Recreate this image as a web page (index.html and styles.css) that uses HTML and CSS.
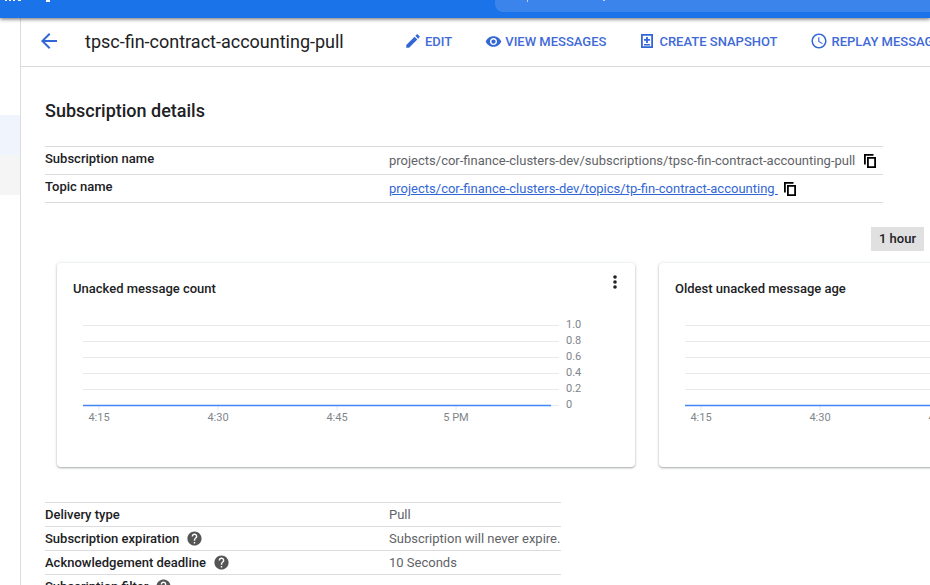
FILE: index.html
```html
<!DOCTYPE html>
<html lang="en">
  <head>
    <meta charset="UTF-8" />
    <meta name="viewport" content="width=device-width, initial-scale=1.0" />
    <title>Subscription details</title>
    <link rel="stylesheet" href="styles.css">
  </head>
  <body>
    <svg class="defs" width="0" height="0">
      <symbol id="i-back" viewBox="0 0 24 24"><path d="M20 11H7.83l5.59-5.59L12 4l-8 8 8 8 1.41-1.41L7.83 13H20v-2z"/></symbol>
      <symbol id="i-edit" viewBox="0 0 24 24"><path d="M3 17.25V21h3.75L17.81 9.94l-3.75-3.75L3 17.25zM20.71 7.04c.39-.39.39-1.02 0-1.41l-2.34-2.34c-.39-.39-1.02-.39-1.41 0l-1.83 1.83 3.75 3.75 1.83-1.83z"/></symbol>
      <symbol id="i-eye" viewBox="0 0 24 24"><path d="M12 4.5C7 4.5 2.73 7.61 1 12c1.73 4.39 6 7.5 11 7.5s9.27-3.11 11-7.5c-1.73-4.39-6-7.5-11-7.5zM12 17c-2.76 0-5-2.24-5-5s2.24-5 5-5 5 2.24 5 5-2.24 5-5 5zm0-8c-1.66 0-3 1.34-3 3s1.34 3 3 3 3-1.34 3-3-1.34-3-3-3z"/></symbol>
      <symbol id="i-snapshot" viewBox="0 0 12 14"><path fill-rule="evenodd" d="M0 0h12v14H0zM1.8 1.8v10.4h8.4V1.8zM5.1 3h1.8v2.1H9v1.7H6.9v2.1H5.1V6.8H3V5.1h2.1zM3 10h6v1.4H3z"/></symbol>
      <symbol id="i-clock" viewBox="0 0 24 24"><path d="M11.99 2C6.47 2 2 6.48 2 12s4.47 10 9.99 10C17.52 22 22 17.52 22 12S17.52 2 11.99 2zM12 20c-4.42 0-8-3.58-8-8s3.58-8 8-8 8 3.58 8 8-3.58 8-8 8zm.5-13H11v6l5.25 3.15.75-1.23-4.5-2.67z"/></symbol>
      <symbol id="i-copy" viewBox="0 0 12 14"><path fill-rule="evenodd" d="M0 0h9.5v1.8H1.8V10.500H0zM3 3h9v11H3zM4.800 4.800v7.400h5.400V4.800z"/></symbol>
      <symbol id="i-help" viewBox="0 0 24 24"><path d="M12 2C6.48 2 2 6.48 2 12s4.48 10 10 10 10-4.48 10-10S17.52 2 12 2zm1 17h-2v-2h2v2zm2.07-7.75l-.9.92C13.45 12.9 13 13.5 13 15h-2v-.5c0-1.1.45-2.1 1.17-2.83l1.24-1.26c.37-.36.59-.86.59-1.41 0-1.1-.9-2-2-2s-2 .9-2 2H8c0-2.21 1.79-4 4-4s4 1.79 4 4c0 .88-.36 1.68-.93 2.25z"/></symbol>
      <symbol id="i-more" viewBox="0 0 4 14"><circle cx="2" cy="2" r="1.8"/><circle cx="2" cy="7" r="1.8"/><circle cx="2" cy="12" r="1.8"/></symbol>
    </svg>

    <header class="topbar">
      <svg class="topbar-cut" width="60" height="3"><path d="M5 0h2v1H5zM9 0h2v1H9zM13 0h2v1h-2zM18 0h3v1h-3zM46 0h4v2h-4z"/></svg>
      <div class="search">
        <svg class="search-cut" width="120" height="3"><path d="M32 0h1v2h-1zM108 0h2v1h-2z"/></svg>
      </div>
    </header>

    <div class="layout">
      <nav class="sidenav">
        <div class="nav-item selected"></div>
        <div class="nav-item muted"></div>
      </nav>

      <div class="page">
        <div class="toolbar">
          <a class="back"><svg class="icon-back"><use href="#i-back"/></svg></a>
          <h1>tpsc-fin-contract-accounting-pull</h1>
          <a class="action action-edit"><svg class="icon-edit"><use href="#i-edit"/></svg>Edit</a>
          <a class="action action-view"><svg class="icon-eye"><use href="#i-eye"/></svg>View messages</a>
          <a class="action action-snap"><svg class="icon-snap"><use href="#i-snapshot"/></svg>Create snapshot</a>
          <a class="action action-replay"><svg class="icon-clock"><use href="#i-clock"/></svg>Replay messages</a>
        </div>

        <main class="content">
          <h2>Subscription details</h2>

          <div class="details">
            <div class="row">
              <span class="label">Subscription name</span>
              <span class="value">projects/cor-finance-clusters-dev/subscriptions/tpsc-fin-contract-accounting-pull</span>
              <svg class="copy"><use href="#i-copy"/></svg>
            </div>
            <div class="row">
              <span class="label">Topic name</span>
              <a class="value link">projects/cor-finance-clusters-dev/topics/tp-fin-contract-accounting&nbsp;</a>
              <svg class="copy"><use href="#i-copy"/></svg>
            </div>
          </div>

          <div class="range"><button class="range-btn">1 hour</button></div>

          <div class="cards">
            <section class="card">
              <div class="card-head">
                <h3>Unacked message count</h3>
                <svg class="more"><use href="#i-more"/></svg>
              </div>
              <svg class="chart" width="578" height="120">
                <g class="grid">
                  <path d="M26 1.5H502M26 17.5H502M26 33.5H502M26 49.5H502M26 65.5H502M26 81.5H502"/>
                  <path d="M42 82v5M161 82v5M280 82v5M399 82v5"/>
                </g>
                <path class="series" d="M26 81.5H494"/>
                <g class="ylabels">
                  <text x="509" y="4">1.0</text>
                  <text x="509" y="20">0.8</text>
                  <text x="509" y="36">0.6</text>
                  <text x="509" y="52">0.4</text>
                  <text x="509" y="68">0.2</text>
                  <text x="509" y="84">0</text>
                </g>
                <g class="xlabels">
                  <text x="42" y="97">4:15</text>
                  <text x="161" y="97">4:30</text>
                  <text x="280" y="97">4:45</text>
                  <text x="399" y="97">5 PM</text>
                </g>
              </svg>
            </section>

            <section class="card">
              <div class="card-head">
                <h3>Oldest unacked message age</h3>
              </div>
              <svg class="chart" width="578" height="120">
                <g class="grid">
                  <path d="M26 1.5H502M26 17.5H502M26 33.5H502M26 49.5H502M26 65.5H502M26 81.5H502"/>
                  <path d="M42 82v5M161 82v5M280 82v5"/>
                </g>
                <path class="series" d="M26 81.5H494"/>
                <g class="xlabels">
                  <text x="42" y="97">4:15</text>
                  <text x="161" y="97">4:30</text>
                  <text x="280" y="97">4:45</text>
                </g>
              </svg>
            </section>
          </div>

          <div class="props">
            <div class="prop">
              <span class="label">Delivery type</span>
              <span class="value">Pull</span>
            </div>
            <div class="prop">
              <span class="label">Subscription expiration<svg class="help"><use href="#i-help"/></svg></span>
              <span class="value">Subscription will never expire.</span>
            </div>
            <div class="prop">
              <span class="label">Acknowledgement deadline<svg class="help"><use href="#i-help"/></svg></span>
              <span class="value">10 Seconds</span>
            </div>
            <div class="prop">
              <span class="label">Subscription filter<svg class="help"><use href="#i-help"/></svg></span>
            </div>
          </div>
        </main>
      </div>
    </div>
  </body>
</html>
```

FILE: styles.css
```css
html,
body {
  height: 100%;
}

body {
  font-family: Roboto, Arial, sans-serif;
  margin: 0;
  color: #202124;
  background-color: white;
  overflow: hidden;
}

.defs {
  display: block;
}

.topbar {
  display: flex;
  height: 18px;
  background-color: #1a73e8;
  box-shadow: 0 1px 4px rgba(0, 0, 0, 0.6);
  position: relative;
  z-index: 1;
}

.topbar-cut {
  fill: white;
  width: 60px;
  flex-shrink: 0;
}

.search {
  margin-left: 435px;
  flex: 1;
  height: 12px;
  background-color: #3b84eb;
  border-bottom-left-radius: 8px;
}

.search-cut {
  display: block;
  fill: #b9d3f8;
}

.layout {
  display: flex;
  height: 567px;
}

.sidenav {
  width: 20px;
  flex-shrink: 0;
  border-right: 1px solid #dadce0;
  padding-top: 97px;
}

.nav-item {
  height: 40px;
}

.nav-item.selected {
  background-color: #eff4fd;
}

.nav-item.muted {
  background-color: #f5f5f5;
}

.page {
  flex: 1;
  min-width: 0;
}

.toolbar {
  display: flex;
  align-items: center;
  box-sizing: border-box;
  height: 49px;
  padding-bottom: 2px;
  border-bottom: 1px solid #dadce0;
  white-space: nowrap;
}

.back {
  display: flex;
  margin-left: 16px;
}

.icon-back {
  width: 24px;
  height: 24px;
  fill: #3367d6;
}

h1 {
  font-size: 18px;
  font-weight: 400;
  margin: 0 0 0 24px;
  width: 319px;
  flex-shrink: 0;
}

.action {
  display: flex;
  align-items: center;
  flex-shrink: 0;
  font-size: 13px;
  font-weight: 500;
  text-transform: uppercase;
  color: #3f6ad8;
}

.action svg {
  fill: #3367d6;
  flex-shrink: 0;
}

.icon-edit {
  width: 18px;
  height: 18px;
  margin-right: 3px;
}

.icon-eye {
  width: 17px;
  height: 17px;
  margin-right: 3px;
}

.icon-snap {
  width: 12px;
  height: 14px;
  margin-right: 6px;
}

.icon-clock {
  width: 18px;
  height: 18px;
  margin-right: 4px;
}

.action-view {
  margin-left: 33px;
}

.action-snap {
  margin-left: 35px;
}

.action-replay {
  margin-left: 32px;
}

.content {
  padding: 0 6px 0 24px;
}

h2 {
  font-size: 18px;
  font-weight: 500;
  line-height: 24px;
  margin: 0;
  padding-top: 32px;
  height: 47px;
  box-sizing: content-box;
}

.details {
  width: 838px;
  border-top: 1px solid #dadce0;
}

.row {
  display: flex;
  align-items: center;
  height: 27px;
  border-bottom: 1px solid #dadce0;
}

.label {
  display: flex;
  align-items: center;
  width: 344px;
  flex-shrink: 0;
  font-size: 13px;
  font-weight: 500;
}

.row .label {
  padding-bottom: 4px;
}

.value {
  font-size: 13px;
  color: #5f6368;
  white-space: nowrap;
}

.value.link {
  color: #3367d6;
  text-decoration: underline;
  margin-right: -3px;
}

.copy {
  width: 12px;
  height: 14px;
  margin-left: 9px;
  flex-shrink: 0;
  fill: black;
}

.range {
  display: flex;
  justify-content: flex-end;
  margin-top: 24px;
}

.range-btn {
  font-family: inherit;
  font-size: 13px;
  font-weight: 500;
  color: #202124;
  width: 53px;
  height: 24px;
  padding: 0 0 2px;
  border: none;
  background-color: #e0e0e0;
}

.cards {
  display: flex;
  gap: 24px;
  margin: 12px 0 0 12px;
}

.card {
  width: 578px;
  height: 204px;
  flex-shrink: 0;
  border-radius: 4px;
  background-color: white;
  box-shadow: 0 1px 2px rgba(60, 64, 67, 0.4), 0 0 4px rgba(60, 64, 67, 0.12);
}

.card-head {
  display: flex;
  justify-content: space-between;
  height: 61px;
  padding: 0 18px 0 16px;
}

h3 {
  font-size: 13px;
  font-weight: 500;
  margin: 18px 0 0;
  line-height: 16px;
}

.more {
  width: 4px;
  height: 14px;
  margin-top: 12px;
  fill: #202124;
}

.chart {
  display: block;
  overflow: visible;
}

.grid path {
  stroke: #e8eaed;
  fill: none;
}

.series {
  stroke: #4285f4;
  stroke-width: 1.5;
  fill: none;
}

.chart text {
  font-family: Roboto, Arial, sans-serif;
  font-size: 11px;
  fill: #80868b;
}

.xlabels text {
  text-anchor: middle;
}

.props {
  width: 516px;
  margin-top: 35px;
  border-top: 1px solid #dadce0;
}

.prop {
  display: flex;
  align-items: center;
  height: 23px;
  border-bottom: 1px solid #dadce0;
}

.help {
  width: 17px;
  height: 17px;
  margin-left: 7px;
  fill: #555;
}
```
